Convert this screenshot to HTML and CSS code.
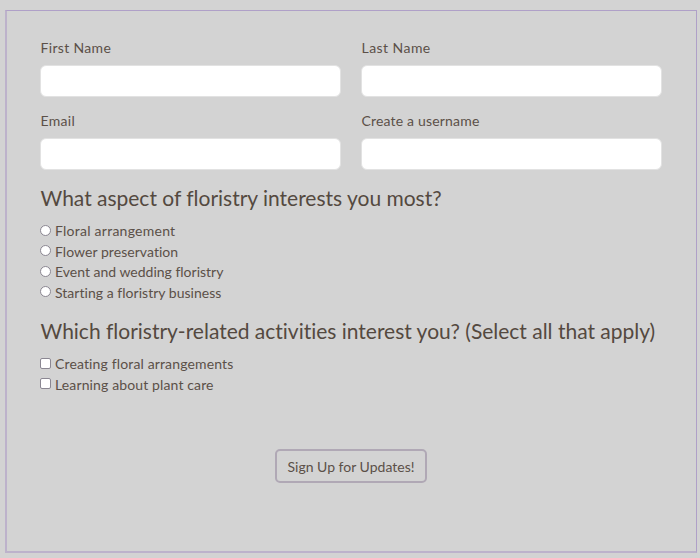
FILE: index.html
```html
<!DOCTYPE html>
<html lang="en">
<head>
<meta charset="utf-8">
<title>Floristry Sign Up</title>
<link rel="stylesheet" href="styles.css">
</head>
<body>
<form class="signup">
  <div class="fields">
    <div class="field"><label for="first"><span class="t-first">First Name</span></label><input id="first" type="text"></div>
    <div class="field"><label for="last"><span class="t-last">Last Name</span></label><input id="last" type="text"></div>
    <div class="field"><label for="email"><span class="t-email">Email</span></label><input id="email" type="email"></div>
    <div class="field"><label for="user"><span class="t-user">Create a username</span></label><input id="user" type="text"></div>
  </div>
  <h2 class="title"><span class="t-aspect">What aspect of floristry interests you most?</span></h2>
  <div class="options">
    <label class="option"><input type="radio" name="aspect"><span class="t-floral">Floral arrangement</span></label>
    <label class="option"><input type="radio" name="aspect"><span class="t-flower">Flower preservation</span></label>
    <label class="option"><input type="radio" name="aspect"><span class="t-event">Event and wedding floristry</span></label>
    <label class="option"><input type="radio" name="aspect"><span class="t-start">Starting a floristry business</span></label>
  </div>
  <h2 class="title title-second"><span class="t-which">Which floristry-related activities interest you? (Select all that apply)</span></h2>
  <div class="options">
    <label class="option"><input type="checkbox"><span class="t-creating">Creating floral arrangements</span></label>
    <label class="option"><input type="checkbox"><span class="t-learning">Learning about plant care</span></label>
  </div>
  <button class="submit" type="button"><span class="t-sign">Sign Up for Updates!</span></button>
</form>
</body>
</html>
```

FILE: styles.css
```css
* { box-sizing: border-box; }
body {
  margin: 0;
  padding: 10px 3px 5px 5px;
  height: 558px;
  background: #d3d3d3;
  color: #5b5048;
  font-family: Lato, "Open Sans", sans-serif;
  font-size: 14px;
  font-variant-ligatures: none;
}
.signup {
  height: 543px;
  padding: 27px 34px 0 33px;
  border: solid #bdb2cb;
  border-width: 1px 1px 2px 2px;
  border-top-color: #afa0c8;
  border-right-color: #afa0c8;
}
.fields {
  display: grid;
  grid-template-columns: 301px 301px;
  column-gap: 20px;
  row-gap: 14px;
}
.field label {
  display: block;
  height: 27px;
  padding-left: 0.5px;
  line-height: 20px;
}
.field input {
  display: block;
  width: 100%;
  height: 32px;
  border: 1px solid #e2e2e2;
  border-radius: 6px;
  background: #fff;
}
.title {
  margin: 13px 0 9px;
  height: 29px;
  padding-left: 0.5px;
  font-size: 21px;
  font-weight: 400;
  line-height: 29px;
  white-space: nowrap;
  color: #544940;
}
.option {
  display: flex;
  align-items: center;
  height: 20.5px;
  line-height: 20px;
  white-space: nowrap;
}
.option input {
  appearance: none;
  flex: none;
  width: 11px;
  height: 11px;
  margin: 0 4px 2px 0;
  border: 1px solid #8b8792;
  border-radius: 50%;
  background: #fff;
}
.option input[type="checkbox"] { border-radius: 2px; }
.submit {
  display: block;
  width: 152px;
  height: 34px;
  margin: 54px auto 0;
  padding: 0;
  border: 2px solid #b0a8b5;
  border-radius: 5px;
  background: transparent;
  color: inherit;
  font: inherit;
  white-space: nowrap;
}
.t-first { letter-spacing: 0.33px; }
.t-last { letter-spacing: 0.45px; }
.t-email { letter-spacing: 0.3px; }
.t-user { letter-spacing: 0.18px; }
.t-aspect { letter-spacing: -0.01px; }
.t-floral { letter-spacing: 0.25px; }
.t-flower { letter-spacing: 0.05px; }
.t-start { letter-spacing: 0.03px; }
.t-which { letter-spacing: -0.01px; }
.t-creating { letter-spacing: 0.14px; }
.t-learning { letter-spacing: 0.13px; }
```
